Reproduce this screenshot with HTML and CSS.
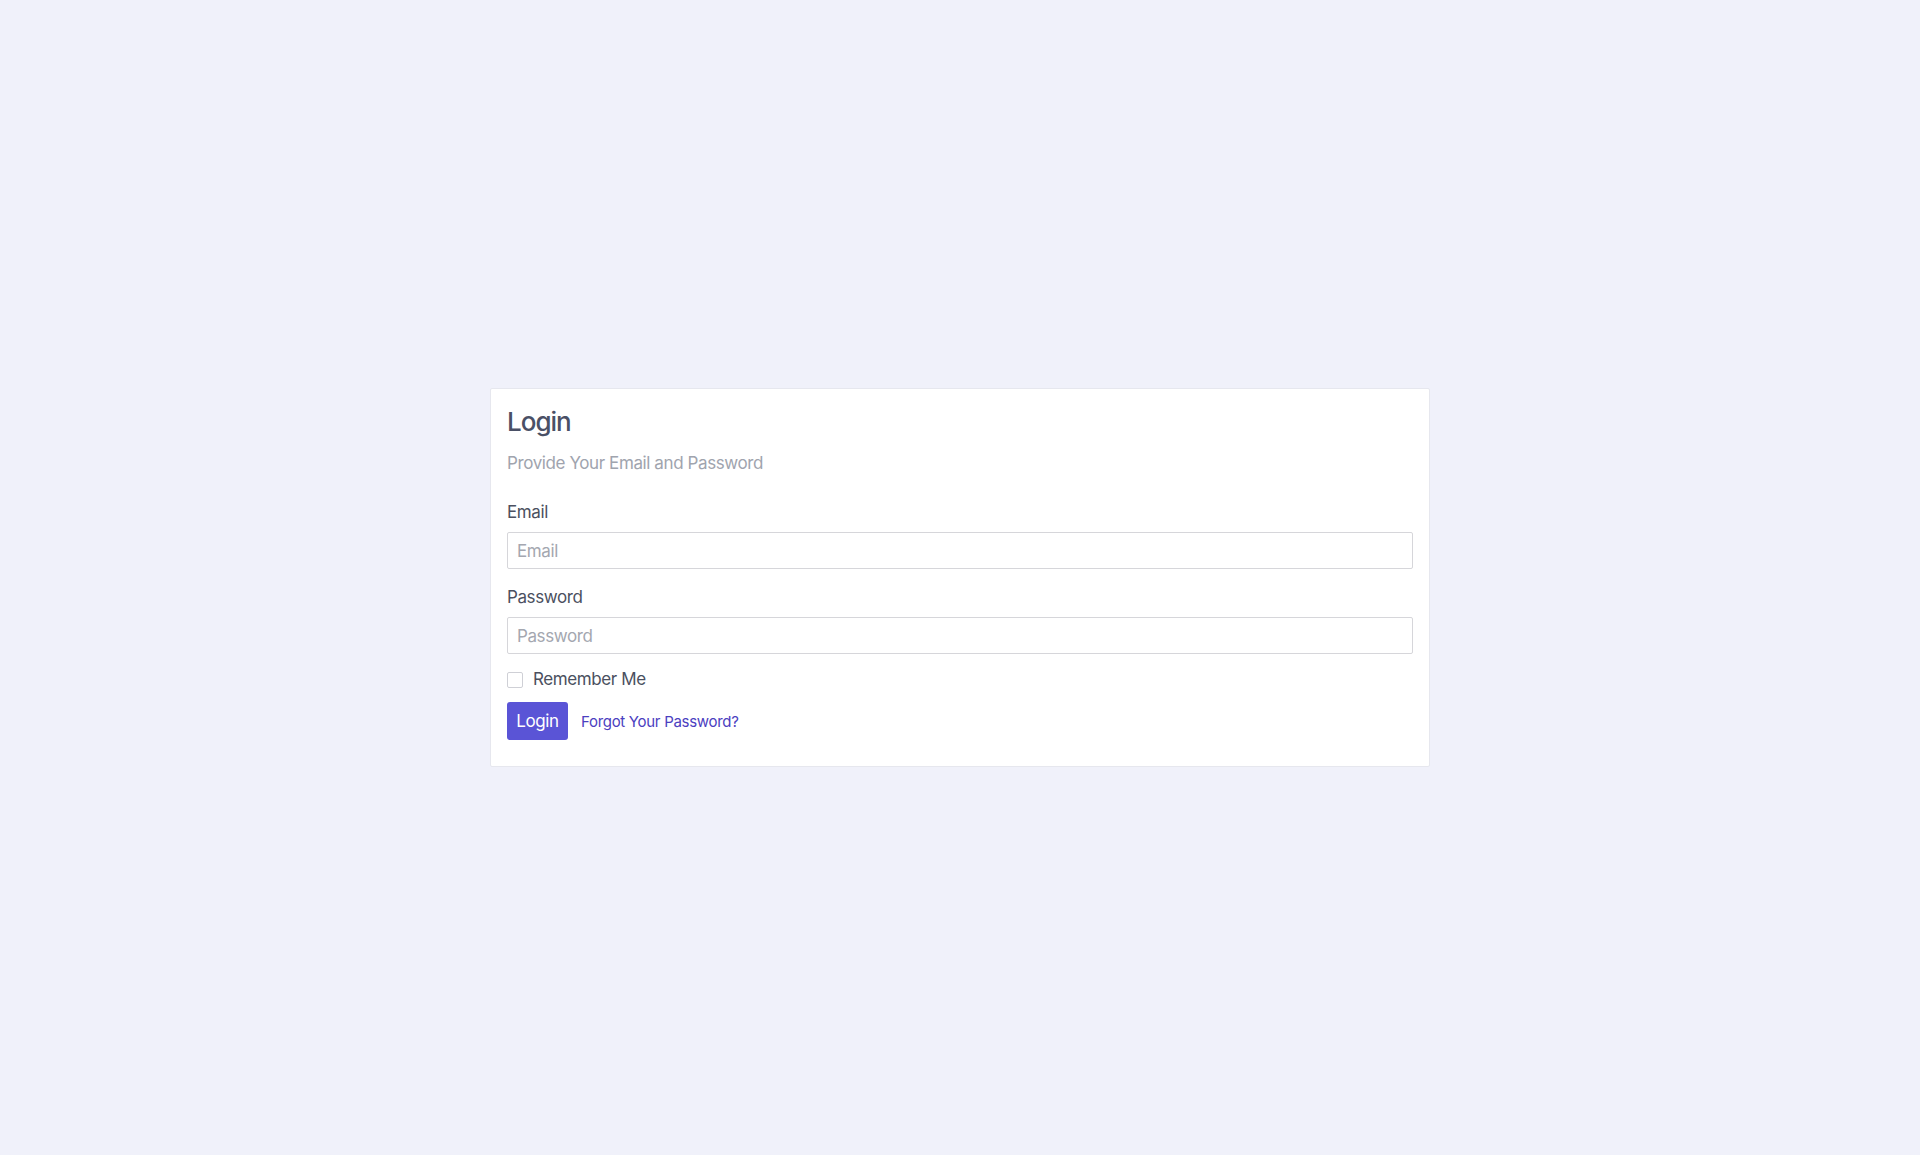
FILE: index.html
```html
<!DOCTYPE html>
<html lang="en">
<head>
<meta charset="utf-8">
<title>Login</title>
<link rel="stylesheet" href="styles.css">
</head>
<body>
<main class="page">
  <form class="card">
    <h1 class="title">Login</h1>
    <p class="subtitle">Provide Your Email and Password</p>
    <label class="label" for="email">Email</label>
    <input class="input" id="email" type="email" placeholder="Email">
    <label class="label label-pw" for="password">Password</label>
    <input class="input" id="password" type="password" placeholder="Password">
    <label class="remember"><span class="check"></span><span>Remember Me</span></label>
    <div class="actions">
      <button type="button" class="btn">Login</button>
      <a class="link" href="#">Forgot Your Password?</a>
    </div>
  </form>
</main>
</body>
</html>
```
FILE: styles.css
```css
html, body {
  margin: 0;
  padding: 0;
  height: 100%;
}
body {
  background: #f0f1fa;
  font-family: Inter, "Noto Sans", "Liberation Sans", sans-serif;
  color: #4b5060;
  letter-spacing: -0.4px;
}
.page {
  height: 100%;
  display: flex;
  align-items: center;
  justify-content: center;
}
.card {
  box-sizing: border-box;
  width: 940px;
  background: #ffffff;
  border: 1px solid #e6e7ee;
  border-radius: 2px;
  padding: 16px 16px 26px 16px;
  display: flex;
  flex-direction: column;
}
.title {
  margin: 0;
  font-size: 26px;
  font-weight: 500;
  line-height: 33px;
  color: #4a5066;
  letter-spacing: -1px;
}
.subtitle {
  margin: 15px 0 0 0;
  font-size: 17px;
  line-height: 21px;
  color: #a0a4ae;
}
.label {
  margin-top: 28px;
  font-size: 17px;
  line-height: 21px;
  color: #4b5060;
}
.label-pw {
  margin-top: 18px;
}
.input {
  box-sizing: border-box;
  margin-top: 9px;
  width: 100%;
  height: 37px;
  border: 1px solid #d6d6da;
  border-radius: 2px;
  padding: 0 9px;
  font-family: inherit;
  font-size: 17px;
  letter-spacing: -0.4px;
  color: #4b5060;
  background: #fff;
  outline: none;
}
.input::placeholder {
  color: #a4a7b0;
}
.remember {
  margin-top: 15px;
  display: flex;
  align-items: center;
  gap: 10px;
  font-size: 17px;
  line-height: 21px;
  color: #4b5060;
}
.check {
  box-sizing: border-box;
  width: 16px;
  height: 16px;
  border: 1px solid #cfd0d6;
  border-radius: 2px;
  background: #fff;
}
.actions {
  margin-top: 12px;
  display: flex;
  align-items: center;
  gap: 13px;
}
.btn {
  height: 38px;
  width: 61px;
  padding: 0;
  border: none;
  border-radius: 3px;
  background: #5a54d6;
  color: #ffffff;
  font-family: inherit;
  font-size: 17px;
  letter-spacing: -0.4px;
  cursor: pointer;
}
.link {
  color: #4b40c0;
  font-size: 15px;
  letter-spacing: -0.3px;
  text-decoration: none;
}
```
